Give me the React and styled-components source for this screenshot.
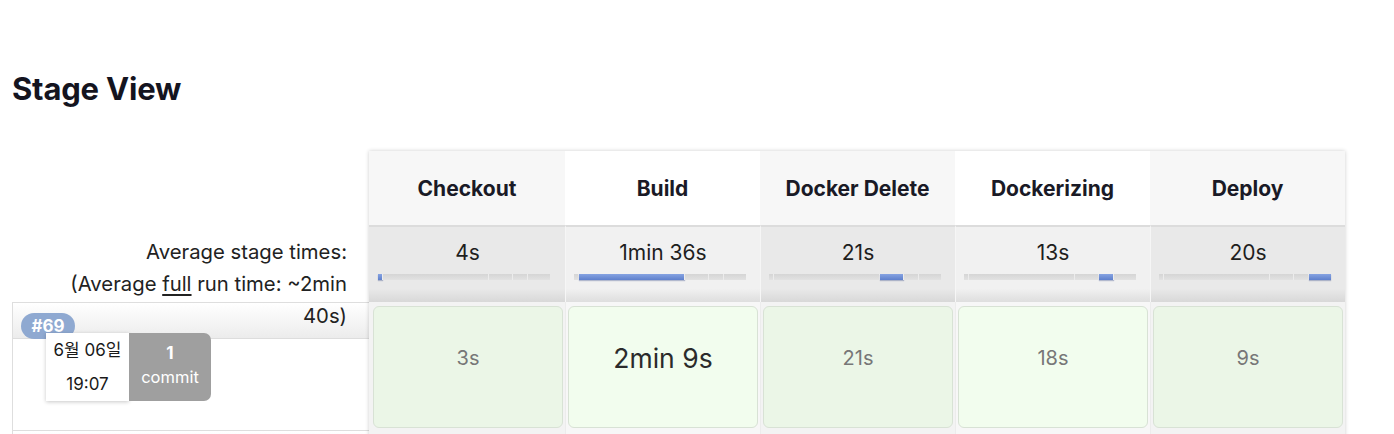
import React from "react";
import styled, { createGlobalStyle } from "styled-components";

const GlobalStyle = createGlobalStyle`
  html, body { margin: 0; padding: 0; background: #fff; }
  body { font-family: Inter, "Noto Sans", "Noto Sans CJK KR", sans-serif; color: #1f1f28; }
  * { box-sizing: border-box; }
`;

const Page = styled.div`
  padding: 70px 12px 0 12px;
  width: 1394px;
`;

const Title = styled.h2`
  margin: 0 0 43px 0;
  font-size: 31px;
  line-height: 38px;
  font-weight: 700;
  color: #14141f;
  letter-spacing: -0.2px;
`;

const Table = styled.div`
  display: flex;
  align-items: flex-start;
`;

const LeftCol = styled.div`
  width: 357px;
  flex: none;
  display: flex;
  flex-direction: column;
`;

const LeftHead = styled.div`
  height: 74px;
`;

const AvgLabel = styled.div`
  position: relative;
  z-index: 1;
  height: 77px;
  padding: 11px 22px 0 0;
  text-align: right;
  font-size: 20.3px;
  line-height: 32px;
  color: #222;
  span { display: block; white-space: nowrap; }
  u { text-decoration: underline; text-underline-offset: 3px; }
`;

const BuildMeta = styled.div`
  height: ${(p) => p.$h}px;
  border: 1px solid #dedede;
  border-right: none;
  border-bottom: none;
  background:
    linear-gradient(#ddd, #ddd) 0 35px / 100% 1px no-repeat,
    linear-gradient(#fff, #ececec) 0 0 / 100% 35px no-repeat,
    #fff;
  display: flex;
  flex-direction: column;
  align-items: flex-start;
  &:last-child { border-bottom: 1px solid #dedede; }
`;

const Badge = styled.div`
  display: flex;
  align-items: center;
  justify-content: center;
  width: 54px;
  height: 26px;
  margin: 10px 0 0 8px;
  border-radius: 13px;
  background: #8fa9d1;
  color: #fff;
  font-size: 17px;
  font-weight: 700;
`;

const Changeset = styled.div`
  position: relative;
  display: flex;
  margin: -6px 0 0 33px;
  height: 68px;
`;

const DateBox = styled.div`
  width: 83px;
  background: #fff;
  box-shadow: 0 1px 4px rgba(0, 0, 0, 0.22);
  display: flex;
  flex-direction: column;
  align-items: center;
  justify-content: center;
  gap: 10px;
  font-size: 17px;
  line-height: 24px;
  color: #1a1a1a;
`;

const CommitBox = styled.div`
  width: 82px;
  background: #9f9f9f;
  border-radius: 0 7px 7px 0;
  display: flex;
  flex-direction: column;
  align-items: center;
  justify-content: center;
  color: #fff;
  font-size: 16.5px;
  line-height: 24px;
  padding-bottom: 4px;
  b { font-weight: 700; font-size: 17px; }
`;

const StagePanel = styled.div`
  width: 976px;
  flex: none;
  box-shadow: 0 0 4px rgba(0, 0, 0, 0.2);
  display: flex;
  flex-direction: column;
`;

const Row = styled.div`
  display: grid;
  grid-template-columns: 196px repeat(4, 195px);
`;

const HeadCell = styled.div`
  height: 74px;
  display: flex;
  align-items: center;
  justify-content: center;
  background: ${(p) => (p.$odd ? "#f7f7f7" : "#fff")};
  font-size: 21px;
  font-weight: 700;
  color: #1a1a26;
`;

const AvgCell = styled.div`
  height: 77px;
  border-top: 2px solid #dcdcdc;
  border-left: ${(p) => (p.$first ? "none" : "1px solid #f6f6f6")};
  background: ${(p) =>
    p.$odd
      ? "linear-gradient(#e9e9e9 0, #e9e9e9 82%, #d8d8d8 100%)"
      : "linear-gradient(#f1f1f1 0, #f1f1f1 82%, #dedede 100%)"};
  padding: 14px 0 0 ${(p) => (p.$first ? 9 : 8)}px;
  display: flex;
  flex-direction: column;
`;

const AvgTime = styled.div`
  font-size: 21px;
  line-height: 24px;
  text-align: center;
  color: #1e1e1e;
  margin-left: -8px;
`;

const Bar = styled.div`
  margin-top: 9px;
  width: 172px;
  height: 6px;
  display: flex;
  background: #dadada;
`;

const Seg = styled.div`
  height: 6px;
  flex: none;
  border-right: 1px solid #ececec;
  background: ${(p) =>
    p.$active
      ? "linear-gradient(#86a3e2, #5f80cc)"
      : "linear-gradient(#d5d5d5, #e2e2e2)"};
  box-shadow: ${(p) => (p.$active ? "0 1px 1px rgba(60,80,140,0.35)" : "none")};
  &:last-child { border-right: none; }
`;

const BuildCol = styled.div`
  height: ${(p) => p.$h}px;
  border-left: ${(p) => (p.$first ? "none" : "1px solid #ececec")};
  background: ${(p) => (p.$odd ? "#f3f3f3" : "#f7f7f7")};
  padding: 4px 2px 2px ${(p) => (p.$first ? 4 : 2)}px;
`;

const StageBox = styled.div`
  height: 122px;
  border: 1px solid #d8e2d5;
  border-radius: 6px;
  background: ${(p) => (p.$odd ? "#ebf6e7" : "#f2fdee")};
  display: flex;
  justify-content: center;
  padding-top: 39px;
  font-size: ${(p) => (p.$big ? 26.5 : 20)}px;
  line-height: 24px;
  color: ${(p) => (p.$big ? "#2b2b2b" : "#777")};
`;

const stages = [
  { name: "Checkout", avg: "4s" },
  { name: "Build", avg: "1min 36s" },
  { name: "Docker Delete", avg: "21s" },
  { name: "Dockerizing", avg: "13s" },
  { name: "Deploy", avg: "20s" },
];

const bounds = [0, 5, 111, 135, 150, 172];

const runs = [
  { id: "#69", date: "6월 06일", time: "19:07", commits: "1", times: ["3s", "2min 9s", "21s", "18s", "9s"], big: 1, h: 128 },
];

function ProgressBar({ active }) {
  return (
    <Bar>
      {bounds.slice(0, -1).map((b, i) => (
        <Seg key={i} $active={i === active} style={{ width: bounds[i + 1] - b }} />
      ))}
    </Bar>
  );
}

export default function App() {
  return (
    <>
      <GlobalStyle />
      <Page>
        <Title>Stage View</Title>
        <Table>
          <LeftCol>
            <LeftHead />
            <AvgLabel>
              <span>Average stage times:</span>
              <span>(Average <u>full</u> run time: ~2min</span>
              <span>40s)</span>
            </AvgLabel>
            {runs.map((r) => (
              <BuildMeta key={r.id} $h={r.h}>
                <Badge>{r.id}</Badge>
                <Changeset>
                  <DateBox>
                    <span>{r.date}</span>
                    <span>{r.time}</span>
                  </DateBox>
                  <CommitBox>
                    <b>{r.commits}</b>
                    <span>commit</span>
                  </CommitBox>
                </Changeset>
              </BuildMeta>
            ))}
            <BuildMeta $h={40} />
          </LeftCol>
          <StagePanel>
            <Row>
              {stages.map((s, i) => (
                <HeadCell key={s.name} $odd={i % 2 === 0}>{s.name}</HeadCell>
              ))}
            </Row>
            <Row>
              {stages.map((s, i) => (
                <AvgCell key={s.name} $odd={i % 2 === 0} $first={i === 0}>
                  <AvgTime>{s.avg}</AvgTime>
                  <ProgressBar active={i} />
                </AvgCell>
              ))}
            </Row>
            {runs.map((r) => (
              <Row key={r.id}>
                {r.times.map((t, i) => (
                  <BuildCol key={i} $odd={i % 2 === 0} $first={i === 0} $h={r.h}>
                    <StageBox $odd={i % 2 === 0} $big={i === r.big}>{t}</StageBox>
                  </BuildCol>
                ))}
              </Row>
            ))}
            <Row>
              {stages.map((s, i) => (
                <BuildCol key={s.name} $odd={i % 2 === 0} $first={i === 0} $h={40}>
                  <StageBox $odd={i % 2 === 0} />
                </BuildCol>
              ))}
            </Row>
          </StagePanel>
        </Table>
      </Page>
    </>
  );
}
